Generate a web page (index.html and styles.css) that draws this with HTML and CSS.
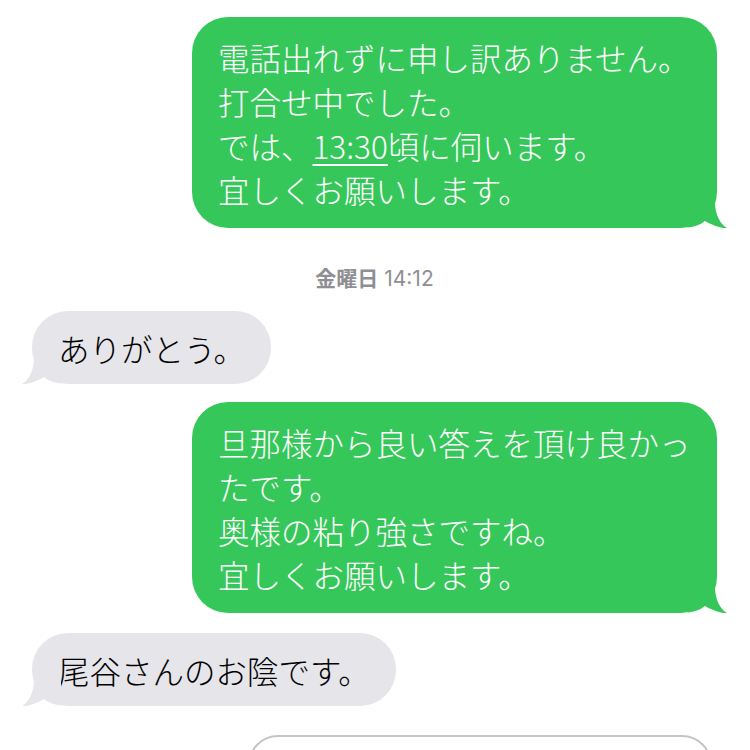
FILE: index.html
```html
<!DOCTYPE html>
<html lang="ja">
<head>
<meta charset="utf-8">
<title>メッセージ</title>
<link rel="stylesheet" href="styles.css">
</head>
<body>
<main class="thread">
  <div class="bubble sent">
    電話出れずに申し訳ありません。<br>打合せ中でした。<br>では、<span class="link">13:30</span>頃に伺います。<br>宜しくお願いします。
    <svg class="tail" viewBox="0 0 42 35" width="42" height="35"><path d="M26 0 L27 8 C27 20 32 30 39 34 C33 34.5 24 31 17 27 C12 31 6 33 0 33.5 L0 0 Z"/></svg>
  </div>
  <div class="stamp"><span class="day">金曜日</span> 14:12</div>
  <div class="bubble recv">
    ありがとう。
    <svg class="tail" viewBox="0 0 42 35" width="42" height="35"><path d="M26 0 L27 8 C27 20 32 30 39 34 C33 34.5 24 31 17 27 C12 31 6 33 0 33.5 L0 0 Z"/></svg>
  </div>
  <div class="bubble sent">
    旦那様から良い答えを頂け良かったです。<br>奥様の粘り強さですね。<br>宜しくお願いします。
    <svg class="tail" viewBox="0 0 42 35" width="42" height="35"><path d="M26 0 L27 8 C27 20 32 30 39 34 C33 34.5 24 31 17 27 C12 31 6 33 0 33.5 L0 0 Z"/></svg>
  </div>
  <div class="bubble recv">
    尾谷さんのお陰です。
    <svg class="tail" viewBox="0 0 42 35" width="42" height="35"><path d="M26 0 L27 8 C27 20 32 30 39 34 C33 34.5 24 31 17 27 C12 31 6 33 0 33.5 L0 0 Z"/></svg>
  </div>
  <div class="composer"></div>
</main>
</body>
</html>
```
FILE: styles.css
```css
html, body {
  margin: 0;
  padding: 0;
  height: 750px;
  overflow: hidden;
  background: #ffffff;
}

.thread {
  display: flex;
  flex-direction: column;
  padding: 17px 33px 0 32px;
  font-family: "Noto Sans CJK JP", sans-serif;
}

.bubble {
  position: relative;
  box-sizing: border-box;
  font-size: 31.5px;
  font-weight: 300;
  line-height: 44px;
  border-radius: 36px;
}

.sent {
  align-self: flex-end;
  width: 525px;
  padding: 18px 24px 17px 26px;
  background: #36c75a;
  color: #ffffff;
}

.sent + .recv { margin-top: 20px; }
.recv + .sent { margin-top: 18px; }

.recv {
  align-self: flex-start;
  padding: 15px 26px 14px 26px;
  background: #e5e5ea;
  color: #000000;
}

.stamp + .recv { margin-top: 20px; }

.tail {
  position: absolute;
  bottom: -1px;
  display: block;
}

.sent .tail {
  right: -13px;
  fill: #36c75a;
}

.recv .tail {
  left: -13px;
  fill: #e5e5ea;
  transform: scaleX(-1);
}

.link {
  text-decoration: underline;
  text-decoration-thickness: 2px;
  text-underline-offset: 5px;
}

.stamp {
  align-self: center;
  margin-top: 37px;
  font-family: "Inter", "Noto Sans CJK JP", sans-serif;
  font-size: 21px;
  line-height: 24px;
  color: #8e8e93;
}

.day {
  font-family: "Noto Sans CJK JP", sans-serif;
  font-weight: 700;
}

.composer {
  align-self: flex-end;
  margin-top: 29px;
  margin-right: 5px;
  width: 464px;
  height: 60px;
  box-sizing: border-box;
  border: 2px solid #c4c4c8;
  border-radius: 34px;
}
```
